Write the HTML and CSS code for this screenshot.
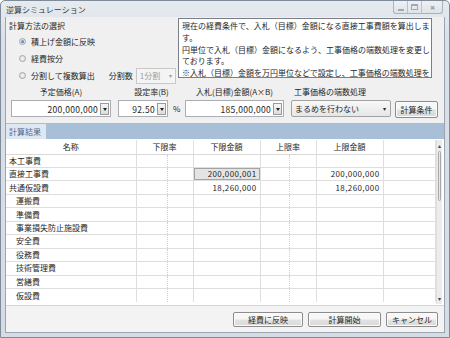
FILE: index.html
```html
<!DOCTYPE html>
<html lang="ja">
<head>
    <meta charset="UTF-8">
    <title>逆算シミュレーション</title>
    <link rel="stylesheet" href="styles.css">
</head>
<body>
<div class="window">
    <div class="titlebar">
        <span class="title">逆算シミュレーション</span>
        <div class="controls">
            <span class="ctl"><i class="min"></i></span>
            <span class="ctl"><i class="max"></i></span>
            <span class="ctl close">&#x2716;</span>
        </div>
    </div>
    <div class="client">
        <div class="top">
            <div class="method">
                <div class="group-title">計算方法の選択</div>
                <label class="radio-row"><span class="radio checked"></span>積上げ金額に反映</label>
                <label class="radio-row"><span class="radio"></span>経費按分</label>
                <div class="radio-row">
                    <span class="radio"></span><span class="split-label">分割して複数算出</span>
                    <span class="split-count">分割数</span>
                    <span class="combo disabled">1分割<span class="arrow">&#9662;</span></span>
                </div>
            </div>
            <div class="note">
                現在の経費条件で、入札（目標）金額になる直接工事費額を算出しま<br>す。<br>
                円単位で入札（目標）金額になるよう、工事価格の端数処理を変更し<br>ております。<br>
                ※入札（目標）金額を万円単位などで設定し、工事価格の端数処理を
            </div>
        </div>

        <div class="params">
            <div class="field f-price">
                <div class="label">予定価格(A)</div>
                <div class="spin">200,000,000<span class="drop"></span></div>
            </div>
            <div class="field f-rate">
                <div class="label">設定率(B)</div>
                <div class="rate-row">
                    <div class="spin">92.50<span class="drop"></span></div>
                    <span class="pct">%</span>
                </div>
            </div>
            <div class="field f-bid">
                <div class="label">入札(目標)金額(A×B)</div>
                <div class="spin">185,000,000<span class="drop"></span></div>
            </div>
            <div class="field f-round">
                <div class="label left">工事価格の端数処理</div>
                <div class="select">まるめを行わない<span class="arrow">&#9662;</span></div>
            </div>
            <button class="btn cond">計算条件</button>
        </div>

        <div class="tabs">
            <span class="tab">計算結果</span>
        </div>

        <div class="grid-wrap">
            <table class="grid">
                <colgroup>
                    <col class="c-name">
                    <col class="c-r1">
                    <col class="c-r2">
                    <col class="c-amt">
                    <col class="c-u1">
                    <col class="c-u2">
                    <col class="c-amt">
                    <col class="c-blank">
                </colgroup>
                <thead>
                    <tr>
                        <th>名称</th>
                        <th colspan="2">下限率</th>
                        <th>下限金額</th>
                        <th colspan="2">上限率</th>
                        <th>上限金額</th>
                        <th></th>
                    </tr>
                </thead>
                <tbody>
                    <tr><td>本工事費</td><td></td><td></td><td></td><td></td><td></td><td></td><td></td></tr>
                    <tr><td>直接工事費</td><td></td><td></td><td class="num sel">200,000,001</td><td></td><td></td><td class="num">200,000,000</td><td></td></tr>
                    <tr><td>共通仮設費</td><td></td><td></td><td class="num">18,260,000</td><td></td><td></td><td class="num">18,260,000</td><td></td></tr>
                    <tr><td class="sub">運搬費</td><td></td><td></td><td></td><td></td><td></td><td></td><td></td></tr>
                    <tr><td class="sub">準備費</td><td></td><td></td><td></td><td></td><td></td><td></td><td></td></tr>
                    <tr><td class="sub">事業損失防止施設費</td><td></td><td></td><td></td><td></td><td></td><td></td><td></td></tr>
                    <tr><td class="sub">安全費</td><td></td><td></td><td></td><td></td><td></td><td></td><td></td></tr>
                    <tr><td class="sub">役務費</td><td></td><td></td><td></td><td></td><td></td><td></td><td></td></tr>
                    <tr><td class="sub">技術管理費</td><td></td><td></td><td></td><td></td><td></td><td></td><td></td></tr>
                    <tr><td class="sub">営繕費</td><td></td><td></td><td></td><td></td><td></td><td></td><td></td></tr>
                    <tr><td class="sub">仮設費</td><td></td><td></td><td></td><td></td><td></td><td></td><td></td></tr>
                </tbody>
            </table>
            <div class="scrollbar">
                <span class="sb-arrow">&#9652;</span>
                <span class="thumb"></span>
                <span class="sb-track"></span>
                <span class="sb-arrow">&#9662;</span>
            </div>
        </div>

        <div class="footer">
            <button class="btn b-apply">経費に反映</button>
            <button class="btn b-start">計算開始</button>
            <button class="btn b-cancel">キャンセル</button>
        </div>
    </div>
</div>
</body>
</html>
```
FILE: styles.css
```css
* {
    margin: 0;
    padding: 0;
    box-sizing: border-box;
}

body {
    width: 450px;
    height: 338px;
    overflow: hidden;
    background: #ffffff;
    font-family: "Noto Sans CJK JP", "Noto Sans", sans-serif;
    font-size: 8px;
    color: #262626;
}

.window {
    width: 450px;
    height: 338px;
    display: flex;
    flex-direction: column;
    background: linear-gradient(#e6ebf0, #d9e0e7 40px, #d5dce4);
    border: 1px solid #7f8b98;
    border-radius: 5px 5px 0 0;
    padding: 0 4px 4px 4px;
}

.titlebar {
    height: 16px;
    display: flex;
    align-items: center;
    justify-content: space-between;
}

.title {
    padding-left: 1px;
    color: #3a3a3a;
}

.controls {
    display: flex;
    align-self: flex-start;
    border: 1px solid #a9b3be;
    border-top: none;
    border-radius: 0 0 3px 3px;
    height: 13px;
    margin-right: 2px;
    background: linear-gradient(#eef1f4, #dde3e9);
}

.ctl {
    width: 14px;
    display: flex;
    align-items: center;
    justify-content: center;
    border-right: 1px solid #b9c2cc;
    color: #9aa3ad;
    font-size: 6px;
}

.ctl.close {
    width: 20px;
    border-right: none;
}

.min {
    width: 6px;
    height: 2px;
    border: 1px solid #a0a8b2;
    margin-top: 5px;
}

.max {
    width: 7px;
    height: 6px;
    border: 1px solid #a0a8b2;
    border-top-width: 2px;
}

.client {
    flex: 1;
    display: flex;
    flex-direction: column;
    background: #f0f0f0;
    border: 1px solid #9aa5b1;
    border-top: none;
}

/* top area */
.top {
    display: flex;
    height: 61px;
    padding-top: 1px;
}

.method {
    width: 172px;
    padding-left: 3px;
}

.group-title {
    height: 14px;
    line-height: 14px;
    margin-top: 1px;
}

.radio-row {
    display: flex;
    align-items: center;
    height: 17px;
    padding-left: 10px;
    white-space: nowrap;
}

.radio {
    flex: none;
    width: 7px;
    height: 7px;
    border-radius: 50%;
    border: 1px solid #a3a6aa;
    background: radial-gradient(circle, #f4f4f4, #dadada);
    margin-right: 5px;
    position: relative;
}

.radio.checked::after {
    content: "";
    position: absolute;
    inset: 1px;
    border-radius: 50%;
    background: radial-gradient(circle at 35% 35%, #7fb0e6, #2659a8);
}

.split-count {
    margin-left: 14px;
    margin-right: 3px;
}

.combo {
    flex: none;
    width: 40px;
    height: 16px;
    border: 1px solid #c8c8c8;
    background: #f4f4f4;
    display: flex;
    align-items: center;
    justify-content: space-between;
    padding: 0 3px;
    color: #9a9a9a;
}

.combo .arrow {
    font-size: 6px;
}

.note {
    width: 254px;
    height: 60px;
    background: #fff;
    border: 1px solid #7a7f87;
    padding: 1px 3px;
    line-height: 11.8px;
    overflow: hidden;
    white-space: nowrap;
}

/* parameter row */
.params {
    display: flex;
    align-items: flex-end;
    height: 42px;
    padding: 8px 0 3px 5px;
}

.field {
    display: flex;
    flex-direction: column;
    gap: 2px;
}

.label {
    height: 12px;
    line-height: 12px;
    text-align: center;
}

.label.left {
    text-align: left;
    padding-left: 3px;
}

.f-price { width: 100px; }
.f-rate { width: 67px; margin-left: 7px; }
.f-bid { width: 99px; }
.f-round { width: 100px; margin-left: 7px; }

.rate-row {
    display: flex;
    align-items: center;
}

.pct {
    margin-left: 5px;
}

.spin {
    height: 17px;
    background: #fff;
    border: 1px solid #abadb3;
    display: flex;
    align-items: center;
    justify-content: flex-end;
    padding-right: 1px;
    font-size: 8.5px;
    letter-spacing: 0.3px;
}

.f-rate .spin {
    width: 50px;
}

.drop {
    width: 9px;
    height: 12px;
    margin-left: 2px;
    border: 1px solid #9a9a9a;
    background: linear-gradient(#f6f6f6, #dcdcdc);
    position: relative;
}

.drop::after {
    content: "";
    position: absolute;
    left: 2px;
    top: 4px;
    border-left: 2.5px solid transparent;
    border-right: 2.5px solid transparent;
    border-top: 3px solid #222;
}

.select {
    height: 17px;
    border: 1px solid #a3a3a3;
    border-radius: 2px;
    background: linear-gradient(#f8f8f8, #e6e6e6);
    display: flex;
    align-items: center;
    justify-content: space-between;
    padding: 0 4px 0 3px;
}

.select .arrow {
    font-size: 6px;
}

.btn {
    font-family: "Noto Sans CJK JP", "Noto Sans", sans-serif;
    font-size: 8px;
    color: #262626;
    border: 1px solid #8c8c8c;
    border-radius: 2px;
    background: linear-gradient(#f7f7f7 45%, #e2e2e2 55%, #d9d9d9);
    box-shadow: inset 0 0 0 1px #fcfcfc;
}

.cond {
    width: 43px;
    height: 17px;
    margin-left: 4px;
    margin-bottom: -1px;
}

/* tabs */
.tabs {
    margin-top: 3px;
    height: 16px;
    background: #a8bfd8;
    display: flex;
    align-items: flex-end;
}

.tab {
    width: 40px;
    height: 15px;
    line-height: 15px;
    padding-left: 3px;
    background: #dfe8f2;
    color: #4b6a93;
}

/* grid */
.grid-wrap {
    height: 167px;
    display: flex;
    background: #fff;
    border-bottom: 1px solid #d4d4d4;
    padding-right: 2px;
}

.grid {
    width: 429px;
    height: 162px;
    table-layout: fixed;
    border-collapse: collapse;
    align-self: flex-start;
    margin-top: 1px;
}

.c-name { width: 130px; }
.c-r1 { width: 31px; }
.c-r2 { width: 26px; }
.c-amt { width: 67px; }
.c-u1 { width: 29px; }
.c-u2 { width: 27px; }
.c-blank { width: 52px; }

.grid th {
    height: 14px;
    font-weight: normal;
    text-align: center;
    border-bottom: 1px solid #d9d9d9;
    border-right: 1px solid #e0e0e0;
}

.grid td {
    height: 13.45px;
    line-height: 12px;
    padding: 0 3px;
    border-bottom: 1px solid #dedede;
    border-right: 1px solid #dedede;
    white-space: nowrap;
}

.grid td:nth-child(2),
.grid td:nth-child(5) {
    border-right: 1px dotted #cfcfcf;
}

.grid tr:last-child td {
    border-bottom: none;
}

.grid td.sub {
    padding-left: 10px;
}

.grid td.num {
    text-align: right;
    letter-spacing: 0.4px;
}

.grid td.sel {
    background: #e4e4e4;
    box-shadow: inset 0 0 0 1px #a4a4a4;
}

.scrollbar {
    width: 9px;
    margin-top: 1px;
    height: 164px;
    display: flex;
    flex-direction: column;
    background: #ececec;
    border-left: 1px solid #e0e0e0;
}

.sb-arrow {
    height: 11px;
    font-size: 6px;
    line-height: 11px;
    text-align: center;
    color: #444;
}

.thumb {
    height: 50px;
    margin: 0 1px;
    border: 1px solid #a8a8a8;
    border-radius: 2px;
    background: linear-gradient(90deg, #f2f2f2, #dcdcdc);
}

.sb-track {
    flex: 1;
}

/* footer */
.footer {
    flex: 1;
    display: flex;
    justify-content: flex-end;
    align-items: flex-start;
    gap: 5px;
    padding: 6px 6px 0 0;
    background: #f3f3f3;
}

.footer .btn {
    height: 15px;
}

.b-apply { width: 70px; }
.b-start { width: 73px; }
.b-cancel { width: 52px; }
```
